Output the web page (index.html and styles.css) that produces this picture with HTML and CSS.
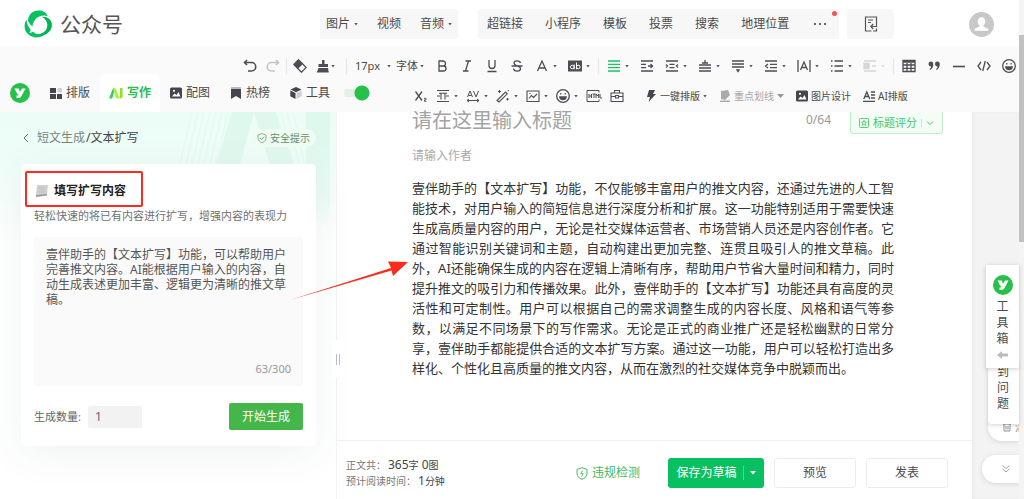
FILE: index.html
```html
<!DOCTYPE html>
<html lang="zh-CN">
<head>
<meta charset="utf-8">
<meta name="viewport" content="width=device-width, initial-scale=1">
<title>公众号</title>
<link rel="stylesheet" href="styles.css">
</head>
<body>
<header class="topbar">
  <a class="brand" href="#">
    <svg class="brand-logo" viewBox="0 0 28 28" aria-hidden="true">
      <path d="M4 10.500C4.500 4 9 .5 14.500.5c4.500 0 8 2 9.300 5.700C19.500 4.800 14.500 6 11.500 9.300 9.500 11.500 8.600 14 8.600 16.500 6.500 15 5 13 4 10.500z" fill="#07c160"/>
      <path d="M2.500 9.500C-.3 14-.2 20 3.800 24c5 4.600 12 4.300 16.700.8-4.500.6-8.500-.3-11.300-3l-3.700 1.400 1.200-3.700C4 16.800 2.800 13.500 2.500 9.500z" fill="#07c160"/>
      <path d="M18 7c5-.8 9.200 2.200 9.900 7 .6 5.500-3.400 10.200-8.900 11.300-2.500.5-5 .2-7-.8 6.500-.2 11-3.500 11.300-9C23.500 12 21.500 9 18 7z" fill="#06b458"/>
    </svg>
    <span>公众号</span>
  </a>
  <nav class="menus">
    <div class="menu-group media">
      <button class="menu-item">图片<i class="caret"></i></button>
      <button class="menu-item">视频</button>
      <button class="menu-item">音频<i class="caret"></i></button>
    </div>
    <div class="menu-group insert">
      <button class="menu-item">超链接</button>
      <button class="menu-item">小程序</button>
      <button class="menu-item">模板</button>
      <button class="menu-item">投票</button>
      <button class="menu-item">搜索</button>
      <button class="menu-item">地理位置</button>
      <button class="menu-item more" aria-label="更多"><svg viewBox="0 0 14 4"><path d="M1 1h2v2H1zM6 1h2v2H6zM11 1h2v2h-2z" fill="#666"/></svg></button>
      <i class="dot"></i>
    </div>
    <div class="menu-group import">
      <button class="menu-item" aria-label="导入"><svg class="doc-icon" viewBox="0 0 14 16" fill="none" stroke="#555" stroke-width="1.200"><path d="M12.500 7V1h-11v14h6M12.500 7v3.500H7M9.300 8L6.800 10.500l2.500 2.500M12.500 12.500V15H9M4 4h5M4 6.500h3"/></svg></button>
    </div>
  </nav>
  <svg class="avatar" viewBox="0 0 24 24" role="img" aria-label="头像"><circle cx="12" cy="12" r="12" fill="#c8c8c8"/><path d="M12 5c2.200 0 3.600 1.700 3.600 4 0 1.600-.8 3-1.700 3.800v1l4.600 2.200V18h-13v-2l4.600-2.200v-1C9.200 12 8.400 10.600 8.400 9c0-2.300 1.400-4 3.600-4z" fill="#fff"/></svg>
</header>

<section class="toolbar">
  <div class="tools-main">
    <div class="tools history">
      <button class="tool bold" aria-label="撤销"><svg viewBox="0 0 14 14"><path d="M4 1L1.500 3.500 4 6M2 3.500h6.500a4 4 0 010 8.500H5"/></svg></button>
      <button class="tool bold faint" aria-label="重做"><svg viewBox="0 0 14 14"><path d="M10 1l2.500 2.500L10 6M12 3.500H5.500a4 4 0 000 8.500H9"/></svg></button>
      <i class="sep"></i>
      <button class="tool" aria-label="清除格式"><svg viewBox="0 0 14 14"><path d="M5.500.8L.8 5.500l3.700 3.700 4.700-4.700z" fill="#4c4d55"/><path d="M9.200 4.500L4.500 9.200l4 4L13.200 8.500z"/></svg></button>
      <button class="tool tight" aria-label="格式刷"><svg viewBox="0 0 14 14"><path d="M6 1h2.500v4H12v3H2.500V5H6zM2.500 9H12l.8 4.500H.8z" fill="#4c4d55" stroke="none"/></svg><i class="caret"></i></button>
    </div>
    <div class="pickers">
      <i class="sep"></i>
      <select class="pick size" aria-label="字号"><option>17px</option></select><i class="caret"></i>
      <select class="pick family" aria-label="字体"><option>字体</option></select><i class="caret"></i>
    </div>
    <div class="tools format">
      <button class="tool" aria-label="加粗"><svg viewBox="0 0 14 14"><path d="M4 2h4a2.400 2.400 0 010 5H4zM4 7h4.500a2.500 2.500 0 010 5H4z"/></svg></button>
      <button class="tool" aria-label="斜体"><svg viewBox="0 0 14 14"><path d="M5.500 2h5.500M3 12h5.500M8.500 2L5.500 12"/></svg></button>
      <button class="tool" aria-label="下划线"><svg viewBox="0 0 14 14"><path d="M4 1v5.500a3 3 0 006 0V1M2.500 12.500h9"/></svg></button>
      <button class="tool" aria-label="删除线"><svg viewBox="0 0 14 14"><path d="M10.500 4C10 1.500 4 1 4 4c0 3.500 6.500 2.300 6.500 5.500C10.500 13 4 13 3.500 9.500M1.500 7h11"/></svg></button>
      <button class="tool" aria-label="文字颜色"><svg viewBox="0 0 14 14"><path d="M2.500 12L7 2l4.500 10M4 9h6"/></svg><i class="caret"></i></button>
      <button class="tool" aria-label="背景色"><svg viewBox="0 0 14 14"><rect y="1.500" width="14" height="11" fill="#4c4d55" stroke="none"/><path d="M6.200 5.500v4.800M8.500 3.500v6.800" stroke="#fff" stroke-width="1"/><circle cx="4.300" cy="8" r="1.800" stroke="#fff" stroke-width="1"/><circle cx="10.300" cy="8" r="1.800" stroke="#fff" stroke-width="1"/></svg><i class="caret"></i></button>
      <i class="sep"></i>
      <button class="tool green" aria-label="对齐"><svg viewBox="0 0 14 14"><path d="M1 2h12M1 5.300h12M1 8.600h12M1 12h12"/></svg><i class="caret"></i></button>
      <button class="tool" aria-label="首行缩进"><svg viewBox="0 0 14 14"><path d="M1 2h12M1 5.300h5M1 8.600h5M1 12h12M8 7h5M10.500 5l2 2-2 2"/></svg></button>
      <button class="tool" aria-label="两端缩进"><svg viewBox="0 0 14 14"><path d="M1 2h12M4.500 5.300h5M4.500 8.600h5M1 12h12M1 5.500L2.500 7 1 8.500M13 5.500L11.500 7 13 8.500"/></svg><i class="caret"></i></button>
      <button class="tool" aria-label="段前距"><svg viewBox="0 0 14 14"><path d="M1 6h12M1 9h12M1 12h12M4 4h6M7 1v3"/></svg><i class="caret"></i></button>
      <button class="tool" aria-label="段后距"><svg viewBox="0 0 14 14"><path d="M1 2h12M1 5h12M1 8h12M6 11h2L7 12.500z"/></svg><i class="caret"></i></button>
      <button class="tool" aria-label="行间距"><svg viewBox="0 0 14 14"><path d="M1 2h12M6 5.300h7M6 8.600h7M1 12h12M4 5L1.500 7 4 9"/></svg><i class="caret"></i></button>
      <button class="tool" aria-label="字间距"><svg viewBox="0 0 14 14"><path d="M1 1v12M13 1v12M3.500 11L7 3l3.500 8M4.800 8.500h4.400"/></svg><i class="caret"></i></button>
      <button class="tool" aria-label="列表"><svg viewBox="0 0 14 14"><path d="M4.500 2H13M4.500 7H13M4.500 12H13M1 2h1.500M1 7h1.500M1 12h1.500"/></svg><i class="caret"></i></button>
      <button class="tool off" aria-label="图文浮动"><svg viewBox="0 0 14 14"><path d="M1 2h12M9 7h4M1 12h12"/><path d="M1 4.500h5v5H1z" fill="#4c4d55"/></svg><i class="caret"></i></button>
      <i class="sep"></i>
      <button class="tool" aria-label="表格"><svg viewBox="0 0 14 14"><path d="M1 1.500h12v11H1zM1 3h12M1 6h12M1 9.300h12M5 4v8.500M9 4v8.500"/></svg></button>
      <button class="tool" aria-label="引用"><svg viewBox="0 0 14 14"><path d="M1.500 5a2.400 2.400 0 114.800 0c0 2.500-1 4.500-3 6l-.8-.8c1-1 1.500-1.800 1.600-2.800A2.400 2.400 0 011.500 5zM8 5a2.400 2.400 0 114.800 0c0 2.500-1 4.500-3 6L9 10.200c1-1 1.500-1.800 1.600-2.800A2.400 2.400 0 018 5z" fill="#4c4d55" stroke="none"/></svg></button>
      <button class="tool" aria-label="分隔线"><svg viewBox="0 0 14 14"><path d="M1 7.500h12" stroke-width="1.600"/></svg></button>
      <button class="tool" aria-label="代码"><svg viewBox="0 0 14 14"><path d="M4 3L1 7l3 4M10 3l3 4-3 4M8.300 2L5.700 12"/></svg></button>
      <button class="tool" aria-label="表情"><svg viewBox="0 0 14 14"><circle cx="7" cy="7" r="6.300"/><path d="M3.800 8h6.400c-.5 3.500-5.900 3.500-6.400 0z" fill="#4c4d55"/><path d="M4.800 4v1.500M9.200 4v1.500"/></svg></button>
    </div>
  </div>
  <div class="tools-sub">
    <nav class="tabs">
      <svg class="yi-logo" viewBox="0 0 20 20" aria-hidden="true"><circle cx="10" cy="10" r="10" fill="#26c04b"/><path d="M4.500 5.500h3.600c.8 0 1 .6 1.200 1.500l.6 2L12 5.500h3.500l-4 7.500c-.9 1.500-1.800 2-3.500 2H6.500v-2.500c1.500 0 2-.3 2.200-1C6.500 11 6 8 4.500 5.500z" fill="#fff"/></svg>
      <a class="tab" href="#"><svg viewBox="0 0 12 12"><path d="M0 1h6v5H0zM0 7h6v5H0zM7 7h5v5H7z" fill="#44454d"/><rect x="7.500" y="1" width="4.500" height="4.500" rx="1" fill="#cfcfd2"/></svg>排版</a>
      <a class="tab active" href="#"><svg class="wide" viewBox="0 0 14 12"><path d="M0 11.500L3.500 2.500C4 1 5.500.5 6 1.500L3.300 11.500z" fill="#35cf5c"/><path d="M4 1c1.500-1 2.300 0 3 1.200l3.800 9.300H8.500c-1 0-1.500-.5-2-1.500z" fill="#b5ee3c"/><path d="M11 1h2.600v8.500c0 1.300-1 2-2.600 2z" fill="#8fe32c"/></svg>写作</a>
      <a class="tab" href="#"><svg viewBox="0 0 12 12"><rect y=".5" width="12" height="11" rx="1.500" fill="#44454d"/><path d="M2 9.500l2.500-3 2 1.500 2-3 2 4.500z" fill="#fff"/><circle cx="4" cy="3.800" r="1.100" fill="#fff"/></svg>配图</a>
      <a class="tab" href="#"><svg viewBox="0 0 12 12"><path d="M1 0h10v2H1z" fill="#bbb"/><path d="M1 2h10v10L6 9l-5 3z" fill="#44454d"/></svg>热榜</a>
      <a class="tab" href="#"><svg viewBox="0 0 12 12"><path d="M6 0l5.500 2.500L6 5.200.5 2.500zM.3 3.500L5.500 6v6L.3 9.300z" fill="#44454d"/><path d="M6.500 6l5.200-2.500v5.800L6.500 12z" fill="#cfcfd2"/></svg>工具</a>
      <label class="switch"><input type="checkbox" checked aria-label="启用插件"></label>
    </nav>
    <div class="tools extra">
      <button class="tool" aria-label="下标"><svg viewBox="0 0 14 14"><path d="M1.500 2.500l6.500 9M8 2.500l-6.500 9"/><path d="M10 9.300h2v1.500h-1.500v1.500h2" stroke-width=".9"/></svg></button>
      <button class="tool" aria-label="表格宽度"><svg viewBox="0 0 14 14"><path d="M1 1.500h12M1 12.500h12M5 4v6.500M9 4v6.500M1 7h3M10 7h3M3 4.300h8" stroke-width="1.100"/></svg><i class="caret"></i></button>
      <button class="tool" aria-label="字距"><svg viewBox="0 0 14 14"><path d="M1.500 8L4 2l2.500 6M2.500 6.500h3M7.500 2L10 8l2.500-6M1 11.500h12M3 10l-2 1.500L3 13M11 10l2 1.500L11 13" stroke-width="1"/></svg><i class="caret"></i></button>
      <button class="tool" aria-label="智能修饰"><svg viewBox="0 0 14 14"><path d="M1 11.500L9.500 3l1.800 1.800L3 13zM3.500 1v3M2 2.500h3M11.500 9v2.500M10.300 10.300h2.400M12.300 1v1.300" stroke-width="1.100"/></svg><i class="caret"></i></button>
      <button class="tool" aria-label="插图"><svg viewBox="0 0 14 14"><path d="M1 2h12v10.500H1zM3 9.500l2.500-3 2 2L11 5M3.500 4.500h1" stroke-width="1.100"/></svg><i class="caret"></i></button>
      <button class="tool" aria-label="笑脸"><svg viewBox="0 0 14 14"><circle cx="7" cy="7" r="6.300"/><path d="M3.800 8h6.400c-.5 3.500-5.900 3.500-6.400 0z" fill="#4c4d55"/><path d="M4.800 4v1.500M9.200 4v1.500"/></svg><i class="caret"></i></button>
      <button class="tool html" aria-label="HTML"><svg viewBox="0 0 16 14"><path d="M13 3.500v-2H1v11h12v-2M3 5v4M5.500 5v4M3 7h2.500M6.500 5h3M8 5v4M10 9V5l1.300 2L12.600 5v4M14 5v4h2" stroke-width="1"/></svg></button>
      <button class="tool" aria-label="素材"><svg viewBox="0 0 14 14"><path d="M1 4h12v8.500H1zM4.500 4V1.500h5V4M1 7.500h4.500M8.500 7.500H13M5.500 6.500h3v2.500h-3z" stroke-width="1.100"/></svg></button>
    </div>
    <div class="tools named">
      <button class="tool"><svg class="small" viewBox="0 0 12 12"><path d="M4 0h6L8 4h3L3.500 12 5 7H2z" fill="#44454d" stroke="none"/></svg>一键排版<i class="caret"></i></button>
      <button class="tool faded"><svg class="small" viewBox="0 0 12 12"><path d="M2 1l7-1 2 5-5 5-4-1zM1 10.500h10V12H1z" fill="#aaa" stroke="none"/></svg>重点划线<i class="caret big"></i></button>
      <button class="tool"><svg class="small" viewBox="0 0 12 12"><rect y=".5" width="12" height="11" rx="1.500" fill="#44454d" stroke="none"/><path d="M2 9.500l2.500-3 2 1.500 2-3 2 4.500z" fill="#fff" stroke="none"/><circle cx="4" cy="3.800" r="1.100" fill="#fff" stroke="none"/></svg>图片设计</button>
      <button class="tool"><svg class="small" viewBox="0 0 12 12"><path d="M.8 9L3.800 2l3 7M2 6.500h3.600M8 2h4M8 5h4M8 8h4M0 11.300h12"/></svg>AI排版</button>
    </div>
  </div>
</section>

<main class="workspace">
  <aside class="panel">
    <svg class="art" viewBox="0 0 160 116" aria-hidden="true">
      <path d="M16 0L4 52M22 0L10 52M28 0L16 52M34 0L22 52M40 0L28 52M46 0L34 52M52 0L40 52M105 0l12 52M111 0l12 52M117 0l12 52" stroke="#e1f9f0" stroke-width="1"/>
      <path d="M56 0h22L62 60H38zM78 0h22l20 60H96z" fill="#dff8ee"/>
      <path d="M130 0h24v116h-24z" fill="#dff8ee"/>
    </svg>
    <div class="crumbs">
      <a class="back" href="#"><svg viewBox="0 0 6 10"><path d="M5 1L1 5l4 4" fill="none" stroke="#666"/></svg>短文生成</a>
      <span class="here">/文本扩写</span>
      <button class="safe"><svg viewBox="0 0 10 10" fill="none"><path d="M5 .6L9 2v3c0 2.500-2 4-4 4.600C3 9 1 7.500 1 5V2z" stroke="#7a9a84" stroke-width=".8"/><path d="M3 5l1.500 1.500L7.200 3.700" stroke="#3ec45c"/></svg>安全提示</button>
    </div>
    <form class="card">
      <h2 class="card-title"><svg viewBox="0 0 12 12"><path d="M1 0h11l-1 10-11 1z" fill="#d0d0d0"/><path d="M0 10l11-1v1.500L0 12z" fill="#999"/><path d="M3 3h6M3 5h6M3 7h6" stroke="#bbb" stroke-width=".7"/></svg>填写扩写内容</h2>
      <p class="hint">轻松快速的将已有内容进行扩写，增强内容的表现力</p>
      <div class="source">
        <textarea class="source-text" aria-label="填写扩写内容">壹伴助手的【文本扩写】功能，可以帮助用户完善推文内容。AI能根据用户输入的内容，自动生成表述更加丰富、逻辑更为清晰的推文草稿。</textarea>
        <span class="count">63/300</span>
      </div>
      <div class="actions">
        <label for="qty">生成数量:</label>
        <input id="qty" class="qty" type="text" value="1">
        <button class="go" type="button">开始生成</button>
      </div>
      <i class="frame"></i>
    </form>
    <i class="splitter"></i>
  </aside>

  <section class="editor">
    <div class="page">
      <div class="title-row">
        <input class="title" type="text" placeholder="请在这里输入标题" aria-label="标题">
        <span class="title-count">0/64</span>
        <button class="score"><svg viewBox="0 0 10 10" fill="none" stroke="#45c765" stroke-width=".9"><rect x=".5" y=".5" width="9" height="9" rx="1"/><path d="M5 2.500l.8 1.600 1.700.2-1.300 1.200.4 1.800L5 6.400l-1.600.9.4-1.800L2.500 4.300l1.700-.2z"/></svg>标题评分<i></i><svg class="down" viewBox="0 0 8 8" fill="none" stroke="#45c765"><path d="M1 2.500l3 3 3-3"/></svg></button>
      </div>
      <input class="author" type="text" placeholder="请输入作者" aria-label="作者">
      <p class="article">壹伴助手的【文本扩写】功能，不仅能够丰富用户的推文内容，还通过先进的人工智能技术，对用户输入的简短信息进行深度分析和扩展。这一功能特别适用于需要快速生成高质量内容的用户，无论是社交媒体运营者、市场营销人员还是内容创作者。它通过智能识别关键词和主题，自动构建出更加完整、连贯且吸引人的推文草稿。此外，AI还能确保生成的内容在逻辑上清晰有序，帮助用户节省大量时间和精力，同时提升推文的吸引力和传播效果。此外，壹伴助手的【文本扩写】功能还具有高度的灵活性和可定制性。用户可以根据自己的需求调整生成的内容长度、风格和语气等参数，以满足不同场景下的写作需求。无论是正式的商业推广还是轻松幽默的日常分享，壹伴助手都能提供合适的文本扩写方案。通过这一功能，用户可以轻松打造出多样化、个性化且高质量的推文内容，从而在激烈的社交媒体竞争中脱颖而出。</p>
    </div>
    <footer class="bottom">
      <div class="stats">
        <div>正文共：<span class="num">365<small>字</small> 0<small>图</small></span></div>
        <div>预计阅读时间：<span class="num">1<small>分钟</small></span></div>
      </div>
      <a class="check" href="#"><svg viewBox="0 0 12 13" fill="none" stroke="#45b85e"><path d="M6 .7l5 1.800v4c0 3-2.500 5-5 5.800-2.500-.8-5-2.800-5-5.800v-4z"/><path d="M6.500 3.500L4.800 6.700h2.400L5.500 9.500" stroke-width=".9"/></svg>违规检测</a>
      <button class="save">保存为草稿<i></i><svg viewBox="0 0 6 4"><path d="M0 0h6L3 3.500z" fill="#fff"/></svg></button>
      <button class="plain">预览</button>
      <button class="plain">发表</button>
    </footer>
  </section>
  <div class="gutter"></div>
</main>

<aside class="float">
  <div class="toolbox">
    <svg viewBox="0 0 20 20" aria-hidden="true"><circle cx="10" cy="10" r="10" fill="#26c04b"/><path d="M4.500 5.500h3.600c.8 0 1 .6 1.200 1.500l.6 2L12 5.500h3.500l-4 7.500c-.9 1.500-1.800 2-3.500 2H6.500v-2.500c1.500 0 2-.3 2.200-1C6.500 11 6 8 4.500 5.500z" fill="#fff"/></svg>
    <span>工具箱</span>
    <svg class="left" viewBox="0 0 12 8"><path d="M0 4l5-4v2.500h6v3H5V8z" fill="#bbb"/></svg>
  </div>
  <div class="problem">到问题</div>
  <div class="pill clear"><svg viewBox="0 0 8 10" fill="none" stroke="#888" stroke-width=".9"><path d="M0 2h8M3 .7h2M1 2v7h6V2M3 4v3.500M5 4v3.500"/></svg>清</div>
  <button class="pill fold" aria-label="收起"><svg viewBox="0 0 8 8" fill="none" stroke="#999" stroke-width=".9"><path d="M.5.500L4 3.500 7.500.5M.5 4L4 7l3.500-3"/></svg></button>
</aside>
<svg class="arrow" viewBox="0 0 120 44" aria-hidden="true"><path d="M0 42L101 10 98 3.500 118 4 103 18l-1.500-5.500z" fill="#fb2c1f"/></svg>
<div class="scroll"><i></i></div>
</body>
</html>
```

FILE: styles.css
```css
* { box-sizing: border-box; }
body {
  margin: 0;
  height: 100vh;
  overflow: hidden;
  display: flex;
  flex-direction: column;
  position: relative;
  background: #fff;
  color: #4a4a4a;
  font: 12px/16px "Noto Sans", "Noto Sans CJK SC", sans-serif;
}
button, input, textarea, select { font: inherit; color: inherit; border: 0; background: none; padding: 0; margin: 0; outline: 0; }
a { color: inherit; text-decoration: none; }
svg { display: block; flex: none; }

.caret { flex: none; width: 4px; height: 3px; background: #555; clip-path: polygon(0 0, 100% 0, 50% 100%); }
.caret.big { width: 7px; height: 4px; background: #999; }
.sep { flex: none; width: 1px; height: 16px; margin: 0 -3px; background: #e6e6e6; }

/* top bar */
.topbar { flex: none; height: 46px; display: flex; align-items: center; padding: 2px 30px 0 24px; }
.brand { width: 296px; display: flex; align-items: center; gap: 8px; font-size: 21px; line-height: 28px; color: #555; }
.brand-logo { width: 28px; height: 28px; }
.menus { display: flex; align-items: center; }
.menu-group { position: relative; height: 30px; display: flex; align-items: center; background: #f7f7f7; border-radius: 2px; }
.menu-item { display: flex; align-items: center; gap: 4px; white-space: nowrap; }
.media { gap: 19px; padding: 0 6px; margin-right: 20px; }
.insert { gap: 22px; padding: 0 12px 0 9px; margin-right: 8px; }
.more { margin-left: 2px; }
.more svg { width: 14px; height: 4px; }
.dot { position: absolute; right: 2px; top: 2px; width: 5px; height: 5px; border-radius: 50%; background: #fa5151; }
.import { width: 47px; justify-content: center; }
.doc-icon { width: 14px; height: 16px; }
.avatar { width: 25px; height: 25px; margin-left: auto; }

/* toolbar */
.toolbar { flex: none; height: 66px; background: #fafafa; display: flex; flex-direction: column; }
.tools-main { height: 28px; padding: 12px 0 0 243px; display: flex; align-items: center; }
.tools { display: flex; align-items: center; gap: 11px; }
.tool { flex: none; display: flex; align-items: center; gap: 4px; white-space: nowrap; }
.tool svg { width: 14px; height: 14px; fill: none; stroke: #4c4d55; stroke-width: 1.3; }
.tool .small { width: 12px; height: 12px; }
.tool.bold svg { stroke-width: 1.6; }
.tool.html svg { width: 16px; }
.tool.tight { gap: 1px; }
.tool.green svg { stroke: #19c566; }
.tool.faint svg { stroke: #c4c4c4; }
.tool.off { opacity: .2; }
.tool.faded { color: #a5a5a5; }
.history { gap: 9px; width: 106px; }
.pickers { display: flex; align-items: center; width: 86px; font-size: 11px; }
.pick { appearance: none; }
.size { width: 32px; margin-left: 11px; }
.family { width: 24px; margin-left: 5px; }
.tools-sub { flex: 1; display: flex; }
.tabs { width: 414px; display: flex; align-items: flex-end; padding-left: 10px; }
.yi-logo { width: 20px; height: 20px; margin: 0 10px 9px 0; }
.tab { width: 60px; height: 38px; display: flex; align-items: center; justify-content: center; gap: 4px; border-radius: 6px 6px 0 0; }
.tab svg { width: 12px; height: 12px; }
.tab .wide { width: 14px; }
.tab.active { background: #fff; color: #26c04b; font-weight: 700; }
.switch { margin: 0 0 11px 4px; height: 16px; }
.switch input { appearance: none; display: block; width: 26px; height: 16px; background: radial-gradient(circle at 18px 8px, #26c04b 7px, transparent 8px), linear-gradient(#e3f0e6, #e3f0e6) 0 4px / 18px 8px no-repeat; border-radius: 8px; }
.extra { gap: 8px; padding-top: 6px; }
.named { gap: 12px; padding-top: 6px; margin-left: 21px; font-size: 10px; }
.named .tool { gap: 3px; }

/* workspace */
.workspace { flex: 1; min-height: 0; display: flex; }
.panel { flex: none; width: 337px; position: relative; border-right: 1px solid #f3f3f3; padding: 0 20px 0 21px; background: linear-gradient(#ebfdf6 0, #effdf8 50px, #fff 130px); }
.art { position: absolute; right: 0; top: 0; width: 160px; height: 116px; -webkit-mask-image: linear-gradient(#000 30%, transparent); mask-image: linear-gradient(#000 30%, transparent); }
.crumbs { position: relative; height: 52px; display: flex; align-items: center; padding-left: 2px; color: #7b8380; }
.back { display: flex; align-items: center; gap: 8px; }
.back svg { width: 6px; height: 10px; }
.here { margin-left: 1px; color: #444; }
.safe { margin-left: auto; height: 18px; padding: 0 6px; display: flex; align-items: center; gap: 3px; border-radius: 9px; background: #effcf1; color: #6d8a72; font-size: 10px; }
.safe svg { width: 10px; height: 10px; }
.card { position: relative; background: #fff; border-radius: 4px; padding: 18px 13px 16px; box-shadow: 0 8px 40px rgba(40, 80, 80, .07); }
.card-title { margin: 0; padding-left: 2px; display: flex; align-items: center; gap: 6px; font-size: 12px; line-height: 18px; color: #222; }
.card-title svg { width: 12px; height: 12px; }
.hint { margin: 8px 0 13px; font-size: 11px; line-height: 16px; color: #707070; white-space: nowrap; }
.source { height: 149px; padding: 10px 12px; display: flex; flex-direction: column; background: #fafafa; border-radius: 3px; color: #555; }
.source-text { flex: 1; resize: none; overflow: hidden; line-height: 15px; }
.count { align-self: flex-end; font-size: 11px; line-height: 14px; color: #999; }
.actions { display: flex; align-items: center; margin-top: 17px; font-size: 11px; color: #666; }
.qty { width: 54px; height: 22px; margin-left: 7px; padding: 0 7px; background: #f2f2f2; border-radius: 2px; font-size: 12px; }
.go { margin-left: auto; width: 74px; height: 27px; border-radius: 2px; background: #45b649; color: #fff; font-size: 12px; }
.frame { position: absolute; left: 4px; top: 7px; width: 118px; height: 36px; border: 2px solid #fb2c1f; border-radius: 2px; }
.splitter { position: absolute; right: -9px; top: 228px; width: 13px; height: 38px; z-index: 1; background: linear-gradient(#b8bcc2, #b8bcc2) 4px 14px / 1px 11px no-repeat, linear-gradient(#b8bcc2, #b8bcc2) 7px 14px / 1px 11px no-repeat, #fff; }

.editor { flex: 1; min-width: 0; display: flex; flex-direction: column; }
.page { flex: 1; min-height: 0; padding: 0 29px 0 75px; }
.title-row { display: flex; align-items: flex-start; }
.title { flex: 1; min-width: 0; height: 26px; margin-top: -4px; font-size: 20px; line-height: 26px; }
.title::placeholder { color: #a3a3a3; }
.title-count { color: #999; }
.score { height: 22px; margin-left: 19px; padding: 0 8px; display: flex; align-items: center; gap: 4px; border: 1px solid #bdeec8; border-top: 0; border-radius: 0 0 4px 4px; background: #f3fdf5; color: #45c765; font-size: 11px; }
.score i { width: 1px; height: 8px; background: #bdeec8; }
.score svg { width: 10px; height: 10px; }
.score .down { width: 8px; height: 8px; }
.author { display: block; height: 20px; margin-top: 12px; line-height: 20px; }
.author::placeholder { color: #aaa; }
.article { margin: 12px 0 0; max-width: 482px; font-size: 13px; line-height: 20px; text-align: justify; color: #333; }
.bottom { flex: none; height: 59px; display: flex; align-items: center; padding: 6px 24px 0 9px; border-top: 1px solid #f0f0f0; }
.stats { margin-right: auto; font-size: 10px; line-height: 16px; color: #777; }
.num { color: #444; font-size: 12px; margin-left: 2px; }
.num small { font-size: 10px; }
.check { display: flex; align-items: center; gap: 4px; margin-right: 28px; color: #45b85e; }
.check svg { width: 12px; height: 13px; }
.save { width: 96px; height: 30px; display: flex; align-items: center; justify-content: center; gap: 6px; border-radius: 3px; background: #07c160; color: #fff; white-space: nowrap; }
.save i { width: 1px; height: 14px; background: #55d48f; }
.save svg { width: 6px; height: 4px; }
.plain { width: 82px; height: 30px; margin-left: 10px; border: 1px solid #ededed; border-radius: 3px; }
.gutter { flex: none; width: 52px; background: #f3f3f3; box-shadow: inset 2px 0 3px #ececec; }

/* floating helpers over the right edge */
.float { position: absolute; right: 5px; top: 265px; width: 37px; display: flex; flex-direction: column; align-items: flex-end; line-height: 16px; }
.toolbox { position: relative; z-index: 3; width: 33px; height: 103px; padding-top: 10px; display: flex; flex-direction: column; align-items: center; background: #fff; box-shadow: 0 1px 5px rgba(0, 0, 0, .2); }
.toolbox svg { width: 20px; height: 20px; }
.toolbox span { width: 12px; margin: 4px 0; }
.toolbox .left { width: 12px; height: 8px; }
.problem { position: relative; z-index: 2; width: 31px; height: 60px; margin-top: -4px; padding: 0 9px; background: #fff; box-shadow: 0 1px 4px rgba(0, 0, 0, .18); border-radius: 0 0 0 3px; }
.pill { background: #fff; box-shadow: 0 1px 5px rgba(0, 0, 0, .12); }
.clear { width: 31px; height: 28px; margin-top: -11px; padding: 0 0 0 15px; display: flex; align-items: center; gap: 4px; overflow: hidden; border-radius: 14px 0 0 14px; font-size: 10px; color: #888; }
.clear svg { width: 8px; height: 10px; }
.fold { width: 37px; height: 28px; margin-top: 14px; padding-left: 20px; border-radius: 14px 0 0 14px; }
.fold svg { width: 8px; height: 8px; }
.arrow { position: absolute; left: 290px; top: 258px; width: 120px; height: 44px; z-index: 4; }
.scroll { position: absolute; right: 0; top: 0; width: 5px; height: 100%; background: #f4f4f4; }
.scroll i { display: block; height: 207px; margin-top: 35px; background: #c1c1c1; }
```
